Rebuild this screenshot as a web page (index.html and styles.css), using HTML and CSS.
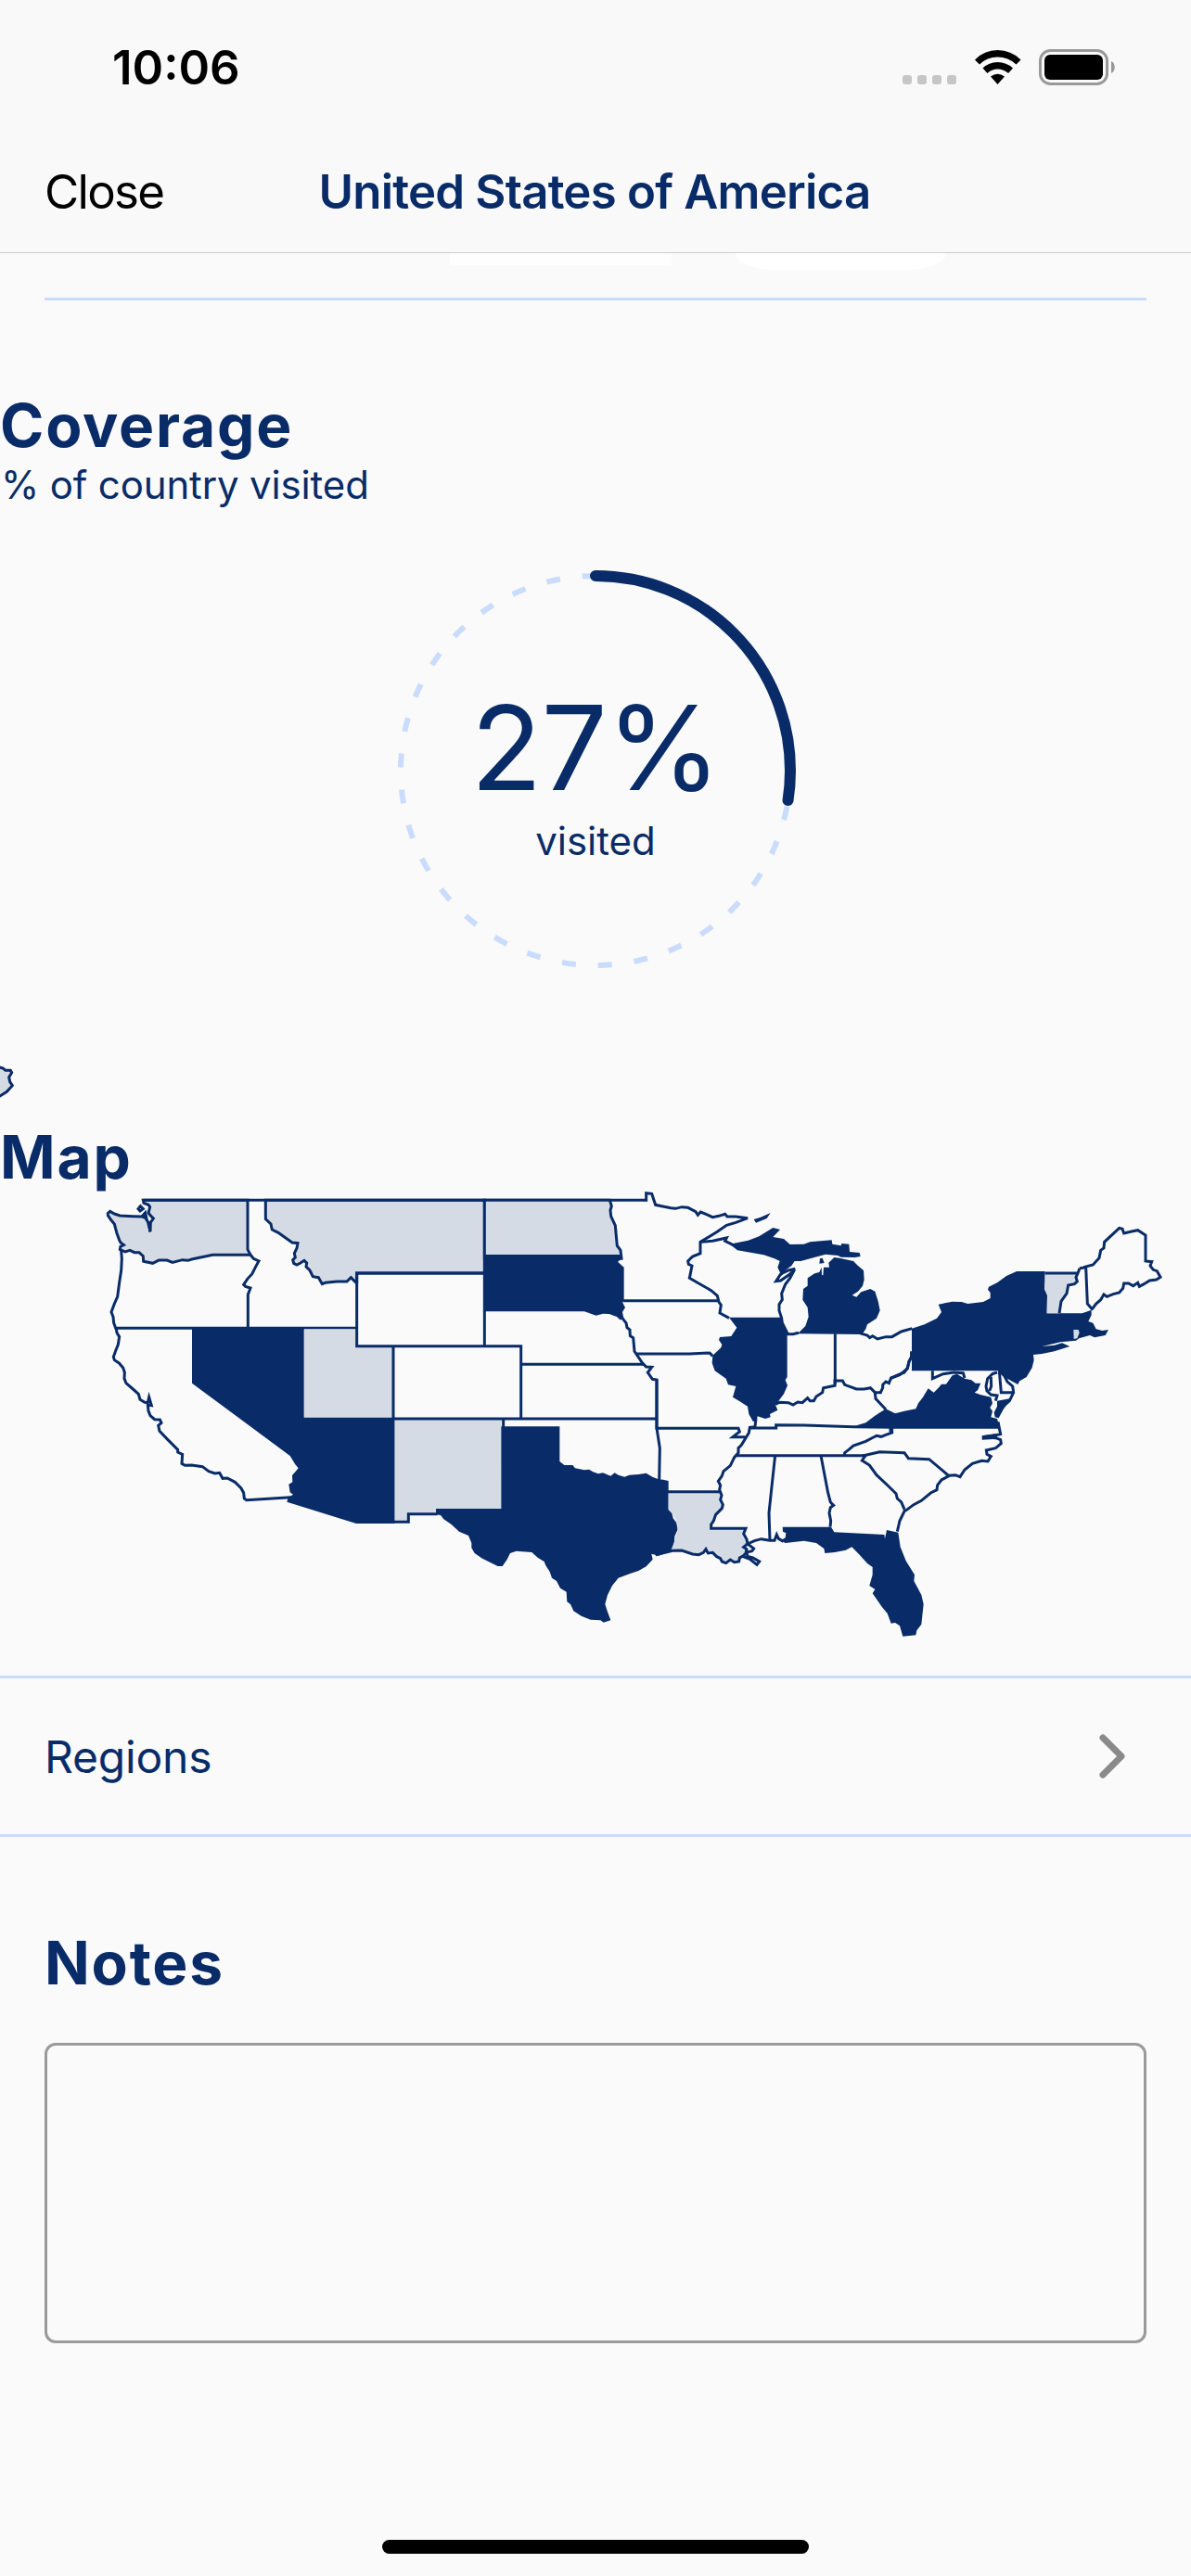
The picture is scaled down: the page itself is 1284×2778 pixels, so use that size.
FILE: index.html
```html
<!DOCTYPE html>
<html lang="en">
<head>
    <meta charset="utf-8">
    <title>United States of America</title>
    <link rel="stylesheet" href="styles.css">
</head>
<body>
    <div class="screen">
        <header class="header">
            <div class="status-bar">
                <span class="time">10:06</span>
                <svg class="status-icons" width="232" height="42" viewBox="970 52 232 42">
                    <g fill="#c6c6c6">
                        <rect x="973" y="81" width="10" height="10" rx="3"/>
                        <rect x="989" y="81" width="10" height="10" rx="3"/>
                        <rect x="1005" y="81" width="10" height="10" rx="3"/>
                        <rect x="1021" y="81" width="10" height="10" rx="3"/>
                    </g>
                    <path d="M1051 64.500Q1061 54 1075.500 54T1100.500 64.500L1095.500 69.500Q1087 61.500 1075.500 61.500T1056 69.500Z"/>
                    <path d="M1059.500 73.500Q1066 67 1075.500 67T1092 73.500L1087 79Q1082 74.500 1075.500 74.500T1064.500 79Z"/>
                    <path d="M1068 82.500Q1075.500 77 1083 82.500L1075.500 91Z"/>
                    <rect x="1121.500" y="54.500" width="72" height="36" rx="11" fill="none" stroke="#999" stroke-width="3"/>
                    <rect x="1126" y="59" width="63" height="27" rx="6"/>
                    <path d="M1198 66C1203 68 1203 77 1198 79Z" fill="#999"/>
                </svg>
            </div>
            <nav class="nav-bar">
                <span class="close">Close</span>
                <span class="title">United States of America</span>
                <span></span>
            </nav>
        </header>

        <div class="list-end">
            <div class="tile"></div>
            <div class="tile tile-round"></div>
        </div>

        <section class="coverage">
            <h2>Coverage</h2>
            <p>% of country visited</p>
            <div class="chart">
                <svg class="ring" width="440" height="440" viewBox="-220 -220 440 440">
                    <circle class="ring-track" r="210" transform="rotate(-90)"/>
                    <circle class="ring-value" r="210" transform="rotate(-90)"/>
                </svg>
                <div class="chart-label">
                    <span class="percent">27%</span>
                    <span class="caption">visited</span>
                </div>
            </div>
        </section>

        <section class="map-section">
            <h2>Map</h2>
            <svg class="map" viewBox="-300 42 3852 1569">
                <!-- Alaska, mostly off screen -->
                <g transform="translate(-300 -450)">
                    <path class="wish line" d="M-10 91L10 96 18 103 34 103 38 110 29 125 32 140 40 152 22 172 0 186 -20 195Z"/>
                </g>

                <!-- west coast and mountains -->
                <g>
                    <path class="wish line" d="M163 73H501V232L510 250H388L352 257 320 264 308 268 290 266 258 274 240 267 214 267 194 277 164 271 163 254 150 242 135 242 120 235 105 240 88 232 90 222 100 218 90 210 86 202 78 180 70 150 60 138 49 122 49 115 56 109 70 117 88 123 130 125 160 126 170 130 178 142 186 174 187 145 196 132 186 122 180 114 185 95 180 88 165 82Z"/>
                    <path class="line" d="M154 92L163 101 153 108 147 101ZM170 113L162 122 173 127ZM183 142L185 176"/>
                    <path class="line" d="M92 236L94 262 92 300 86 340 80 385 70 408 60 435 66 450 68 470 74 487H853"/>
                    <path class="line" d="M510 250L520 262 537 270 528 286 515 312 500 328 488 346 494 352 510 357 502 378V487"/>
                    <path class="wish line" d="M559 73V134L576 150 580 168 600 178 625 196 645 210 663 212 660 228 652 245 655 258 647 266 650 277 660 282 672 276 684 268 692 276 690 288 702 300 712 320 730 323 742 344 752 340 790 336 822 336 835 323 850 338H854V309H1267V73Z"/>
                    <path class="wish" d="M683 490H854V545H972V776H683Z"/>
                    <path class="line" d="M76 488L78 502 86 515 82 540 74 560 67 580 70 590 85 600 98 615 103 630 102 650 108 665 130 684 148 700 153 718 168 727 178 728 182 710 190 737 178 735 180 755 186 770 200 782 217 783 222 793 212 802 216 820 245 850 275 880 275 888 290 895 288 925 298 931 320 930 355 935 375 950 395 957 410 955 420 973 435 972 460 985 480 1005 488 1020 490 1038 497 1043 640 1034"/>
                    <path class="visited" d="M321 483H683V776H977V1119H852L628 1049 632 1035 648 1025 638 1018 634 992 646 985 645 963 655 952 665 940 655 928 638 900 321 665Z"/>
                </g>

                <!-- plains -->
                <g transform="translate(810 0)">
                    <path class="line" d="M-647 73H980"/>
                    <path class="wish line" d="M457 73H862L868 92 864 105 866 125 880 155 884 200 886 220 897 235 900 262H457Z"/>
                    <path class="visited" d="M454 249H893L902 262 888 272 908 290V393L904 405 912 420 903 435 908 458 895 460 885 450 860 441 840 440 818 446 780 433H454Z"/>
                    <path class="wish" d="M167 780H511V1071H300V1088H211V1114H167Z"/>
                    <path class="line" d="M44 309H457V545H44ZM162 545H575V780H162ZM575 604H973M575 780H1014M518 780V808M165 1114H211V1088H305"/>
                </g>

                <!-- Texas, Oklahoma -->
                <g transform="translate(900 690)">
                    <path class="visited" d="M421 115H610V228L625 240 652 240 660 250 690 256 705 254 718 262 735 268 750 265 775 275 788 265 800 272 820 278 835 272 865 270 890 266 910 278 930 286 945 287 962 291V385L973 395 977 412 990 430 992 448 982 470 980 500 970 518 950 526 930 533 907 527 911 545 890 568 865 582 840 590 820 598 800 605 780 630 765 660 757 690 765 715 775 742 752 749 742 742 710 740 680 728 655 712 645 690 634 682 632 650 612 638 600 615 585 605 578 585 565 565 560 552 540 540 520 522 490 520 470 518 450 525 440 545 425 567 410 567 360 542 335 525 325 508 325 492 315 468 285 455 260 432 235 415 225 402 210 400V381H421Z"/>
                    <path class="line" d="M924 -38V120L934 185 932 290"/>
                </g>

                <!-- Great Lakes and midwest -->
                <g transform="translate(1680 0)">
                    <path class="line" d="M110 77V50L128 52 140 88 160 92 190 98 205 100 225 95 245 97 270 110 277 121 286 111 305 119 325 128 345 124 365 118 372 126 400 126 438 131 400 145 370 154 340 175 285 208V245L260 255 245 270 247 280 258 285 250 325 285 345 320 365 340 382 345 402 352 412 348 438 378 454"/>
                    <path class="line" d="M285 208L325 205 370 195 365 205 390 217"/>
                    <path class="line" d="M36 398H343"/>
                    <path class="line" d="M25 445L45 470 48 485 57 492 58 512 68 518 72 562 98 600 110 612 128 613 115 630 130 652 144 654V815"/>
                    <path class="line" d="M75 570L250 570 315 567 325 577"/>
                    <path class="visited" d="M378 452H545L550 475 566 508V645L560 655 567 672 555 700 540 720 528 735 535 752 510 765 512 775 495 780 470 772 466 790 455 788 442 765 438 740 415 725 390 710 400 675 375 670 368 650 332 625 323 600 325 575 352 550 355 540 345 525 348 516 385 513 403 485Z"/>
                    <path class="visited" d="M380 215L440 203 475 190 520 162 543 168 520 192 555 198 575 216 620 215 640 208 710 202 712 215 740 220 742 213 766 215 768 240 800 243 803 255 785 258 740 257 730 252 690 248 640 262 610 270 590 270 580 285 560 300 548 318 535 290 542 270 525 262 490 250 405 235Z"/>
                    <path class="visited" d="M458 135L480 128 512 114 500 132 465 146ZM672 262L680 260 686 276 670 278Z"/>
                    <path class="visited" d="M600 505L625 480 635 450 632 420 616 395 618 360 632 350 632 325 655 310 670 306 677 290 678 315 682 316 684 290 702 290 700 275 718 258 735 260 780 270 795 285 813 300 815 330 810 350 795 368 776 380 790 386 805 370 835 360 850 368 860 400 866 430 855 455 825 475 820 490 808 507Z"/>
                    <path class="line" d="M592 295L570 300 545 312 530 335 545 333 575 312 590 297 575 325 560 345 548 375 550 395 540 410 540 430 548 455 550 470 568 506H585L603 502"/>
                    <path class="line" d="M528 733L540 727 570 728 585 735 600 726 615 728 632 713 640 722 652 722 660 708 680 695 683 680 720 673 720 657 745 657 752 670 790 684 815 684 835 680 850 695 868 695 875 680 875 670 885 660 895 665 902 648 930 638 955 618 960 595 968 580 968 562"/>
                    <path class="line" d="M721 505V670M800 503L825 510 833 518 842 512 858 522 885 515 905 515 935 498 970 488M850 695L852 715 885 750M900 808V822"/>
                </g>

                <!-- south -->
                <g transform="translate(1800 570)">
                    <path class="wish" d="M62 446H228L230 470 238 488 235 500 215 520 208 540 200 565H312L305 585 318 615 308 625 315 632 302 655 290 672 265 668 248 677 230 668 205 645 182 632 160 650 120 640 70 637 80 610 92 570 85 535 73 515 62 503Z"/>
                    <path class="line" d="M24 241H288L292 252 270 269H310M60 446H228"/>
                    <path class="line" d="M345 208L342 236 325 238 322 256 312 272 298 295 288 305 288 320 275 335 262 362 240 380 235 395 223 412 230 425 227 440 234 458 230 472 238 488 235 500 215 520 208 540 200 552V565H312L305 582 315 600 318 615 305 625 315 632 312 645 302 655 325 664 348 682 356 672 335 660 318 655 314 642 332 638 338 630 325 620 318 615 340 605 362 599 390 604 405 604 412 585 418 598 434 607"/>
                    <path class="line" d="M20 650L75 637 105 636 140 648 160 650 175 643 183 632 190 645 205 643 218 656 230 662 235 672 248 677 262 666 275 674 290 672 292 660 302 655"/>
                    <path class="line" d="M325 240H410V230L500 231 662 236 790 238M278 329H700M407 329L396 430 387 515 390 604M555 329L578 450 586 480 596 490 586 497 582 515 587 540 585 560"/>
                    <path class="line" d="M785 241V255L765 262 750 268 735 265 725 270 700 283 660 297 645 310 632 320V329"/>
                    <path class="line" d="M700 328L688 345 712 360 735 392 765 420 798 452 802 468 815 480 825 503"/>
                    <path class="line" d="M690 330L745 317 825 320 838 338 905 341 968 394"/>
                    <path class="line" d="M828 503L810 540 802 575"/>
                    <path class="visited" d="M431 560H588L598 577 760 585 762 598 768 570 805 578 812 625 830 670 858 715 856 735 880 780 887 810 880 875 865 895 862 910 820 914 810 880 795 870 782 872 770 840 752 818 722 775 730 762 712 750 722 715 722 690 705 678 680 650 655 625 635 635 600 642 568 645 565 630 540 612 500 605 440 612 424 604 440 595 442 580 432 575Z"/>
                </g>

                <!-- northeast and Atlantic coast -->
                <g transform="translate(2580 90)">
                    <path class="visited" d="M69 398L110 385 150 365 165 345 155 320 200 311 230 312 250 318 300 312 323 300 323 282 315 272 318 263 345 250 375 228 408 213H500V245L498 270 507 290 506 349H620L650 338 650 355 640 375 655 380 665 400 685 405 705 402 695 420 660 427 645 420 610 430 600 437 550 442 490 456 530 452 555 445 580 456 530 472 490 480 462 483 464 500 458 525 440 555 418 568 412 579 395 570 360 550 348 535H69Z"/>
                    <path class="wish" d="M592 402H608L611 412 604 430 593 432ZM500 220H605L598 250 575 260 565 290 550 320 545 349H506L507 290 498 270Z"/>
                    <path class="line" d="M500 219H605M612 203L605 222 600 232 604 246 595 254 575 258 570 285 552 310 546 349M612 203L632 200 637 318 652 335"/>
                    <path class="line" d="M625 200L655 192 675 170 680 145 690 138 692 118 740 73 750 76 755 90 780 84 800 80 825 96V180L845 182 840 195 850 208 862 212 873 232 860 240 838 243 820 254 805 262 800 250 785 260 770 252 755 252 752 268 740 282 720 287 700 295 690 288 680 305 665 318 650 338"/>
                    <path class="visited" d="M-115 713L-80 703 -50 680 -15 658 15 673 45 665 82 658 90 640 105 620 122 592 140 605 155 590 165 578 180 578 200 550 215 545 240 560 262 565 275 575 292 575 282 598 272 605 290 612 325 620 330 640 322 655 330 665 325 685 345 690 354 722H0V718Z"/>
                    <path class="line" d="M68 475L68 490 60 505 55 525 45 540 20 550 0 560M136 535V560L170 545 205 540 235 542 240 558M345 540L330 545 314 560 309 585 312 600 325 612 345 615 340 632M325 555L326 585 320 600M352 535L358 605H398M365 545L378 570 395 585 398 605 385 632 365 650"/>
                    <path class="visited" d="M345 632L390 624 365 660 350 688 338 685 335 670 345 650Z"/>
                    <path class="line" d="M348 700L356 740 340 743 298 749 340 752 356 758 358 770 340 785 310 792 312 805 325 812 315 828 295 826 265 835 240 855 225 878 210 872 190 874 165 888 152 905 150 920 130 930 100 955 75 968 48 988"/>
                    <path class="visited" d="M296 745L345 738V755L296 758Z"/>
                </g>
            </svg>
        </section>

        <a class="row">
            <span>Regions</span>
            <svg width="32" height="50" viewBox="0 0 32 50">
                <path d="M5 5L25 25 5 45"/>
            </svg>
        </a>

        <section class="notes">
            <h2>Notes</h2>
            <div class="notes-input"></div>
        </section>

        <div class="home-indicator"></div>
    </div>
</body>
</html>
```
FILE: styles.css
```css
* {
    box-sizing: border-box;
}

body {
    margin: 0;
    background: #fafafa;
    color: #092c68;
    font-family: Inter, "Liberation Sans", sans-serif;
}

h2, p {
    margin: 0;
}

h2 {
    font-size: 64px;
    line-height: 80px;
    font-weight: 700;
    letter-spacing: 1.8px;
}

.screen {
    display: flex;
    flex-direction: column;
    width: 1284px;
    height: 2778px;
    overflow: hidden;
}

.header {
    height: 273px;
    background: #f9f9f9;
    border-bottom: 1px solid #cfcfcf;
}

.status-bar {
    display: flex;
    justify-content: space-between;
    padding: 43px 82px 0 121px;
    height: 143px;
}

.time {
    font-size: 51px;
    line-height: 60px;
    font-weight: 600;
    color: #000;
}

.status-icons {
    margin-top: 9px;
}

.nav-bar {
    display: grid;
    grid-template-columns: 1fr auto 1fr;
    align-items: center;
    padding: 0 50px 2px 48px;
    height: 128px;
    font-size: 51px;
}

.close {
    color: #000;
    letter-spacing: -1.7px;
}

.title {
    font-weight: 600;
    letter-spacing: -0.8px;
}

.list-end {
    display: flex;
    gap: 69px;
    height: 51px;
    margin: 0 48px;
    padding-left: 437px;
    border-bottom: 3px solid #cadcfc;
}

.tile {
    width: 239px;
    height: 13px;
    background: #fefefe;
}

.tile-round {
    width: 227px;
    height: 18px;
    background: #fff;
    border-radius: 0 0 44px 44px / 0 0 18px 18px;
}

.coverage {
    height: 788px;
    padding-top: 95px;
}

.coverage p {
    padding-left: 1px;
    font-size: 42px;
    line-height: 48px;
    letter-spacing: -0.15px;
}

.chart {
    display: grid;
    place-items: center;
    margin-top: 64px;
}

.ring, .chart-label {
    grid-area: 1 / 1;
}

.ring circle {
    fill: none;
}

.ring-track {
    stroke: #cadcfc;
    stroke-width: 6;
    stroke-dasharray: 15 24;
    stroke-dashoffset: -17.7;
}

.ring-value {
    stroke: #092c68;
    stroke-width: 12;
    stroke-linecap: round;
    stroke-dasharray: 362 1400;
}

.chart-label {
    display: flex;
    flex-direction: column;
    align-items: center;
    gap: 11px;
    padding-top: 11px;
}

.percent {
    font-size: 126px;
    line-height: 130px;
    letter-spacing: -1px;
}

.caption {
    font-size: 42px;
    line-height: 50px;
}

.map-section {
    height: 695px;
    padding-top: 97px;
}

.map-section h2 {
    height: 75px;
    line-height: 77px;
}

.map {
    display: block;
    width: 1284px;
    height: 523px;
    overflow: visible;
}

.line {
    fill: none;
    stroke: #092c68;
    stroke-width: 9;
}

.wish {
    fill: #d5dbe5;
}

.visited {
    fill: #092c68;
}

.row {
    display: flex;
    justify-content: space-between;
    align-items: center;
    height: 174px;
    padding: 0 68px 0 48px;
    border-top: 3px solid #cadcfc;
    border-bottom: 3px solid #cadcfc;
    font-size: 48px;
    letter-spacing: -0.2px;
}

.row path {
    fill: none;
    stroke: #8a8a8a;
    stroke-width: 7;
    stroke-linecap: round;
    stroke-linejoin: round;
}

.notes {
    padding: 96px 48px 0;
}

.notes-input {
    height: 324px;
    margin-top: 46px;
    border: 3px solid #9a9a9a;
    border-radius: 12px;
}

.home-indicator {
    width: 460px;
    height: 15px;
    margin: auto auto 24px;
    border-radius: 8px;
    background: #000;
}
```
